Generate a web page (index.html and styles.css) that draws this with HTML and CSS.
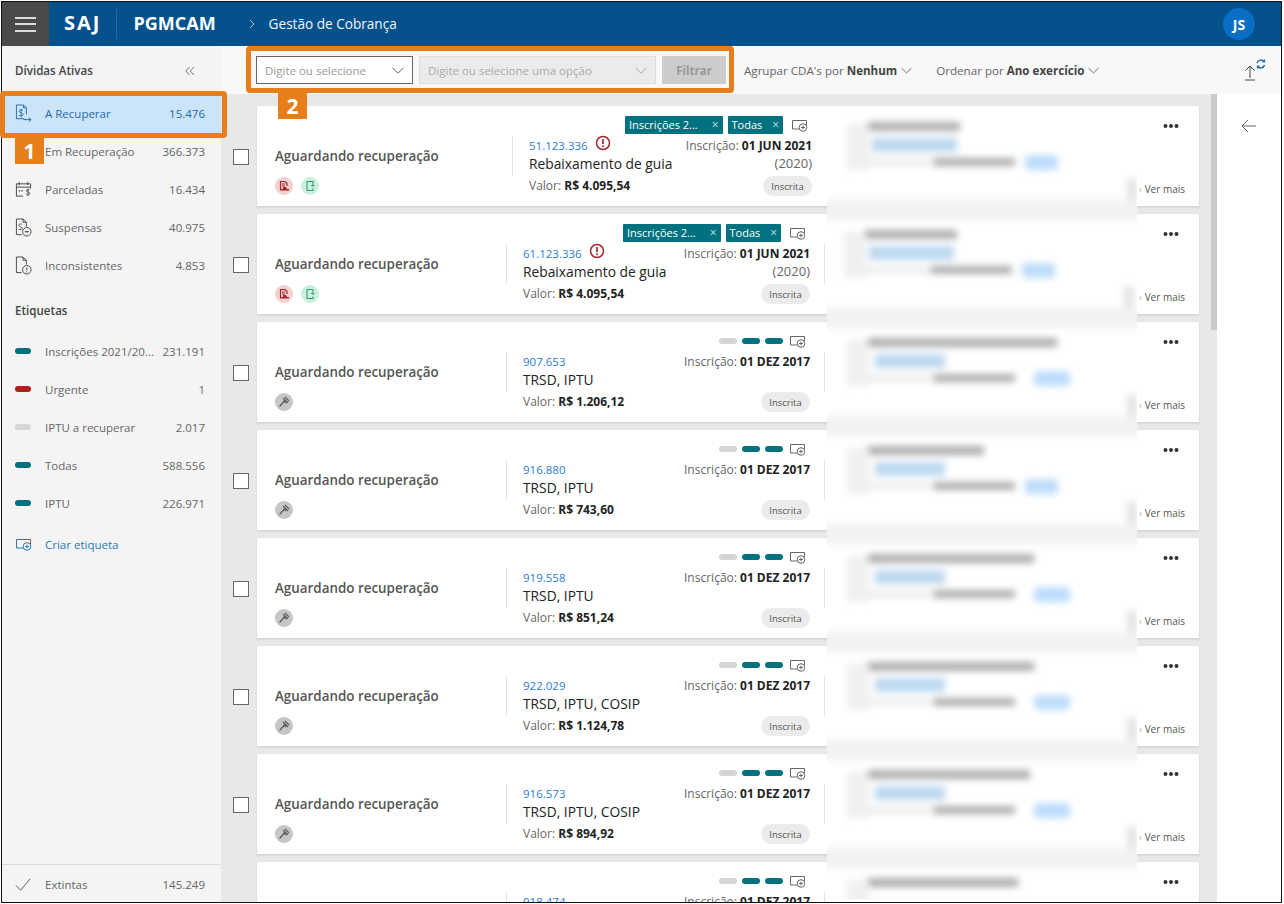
FILE: index.html
```html
<!DOCTYPE html>
<html lang="pt-BR">
<head>
<meta charset="utf-8">
<title>PGMCAM - Gestão de Cobrança</title>
<link rel="stylesheet" href="styles.css">
</head>
<body>
<svg class="defs" width="0" height="0" aria-hidden="true">
  <symbol id="tag-add" viewBox="0 0 17 13"><path d="M9 10H1.500V1.500h14v5" fill="none" stroke="currentColor"/><circle cx="12" cy="8.500" r="3.800" fill="#fff" stroke="currentColor"/><path d="M12 6.500v4M10 8.500h4" stroke="currentColor"/></symbol>
  <symbol id="chev" viewBox="0 0 12 7"><path d="M.5.8 6 6.200 11.500.8" fill="none" stroke="currentColor"/></symbol>
  <symbol id="dots" viewBox="0 0 16 6"><circle cx="2.500" cy="3" r="2"/><circle cx="8" cy="3" r="2"/><circle cx="13.500" cy="3" r="2"/></symbol>
  <symbol id="gavel" viewBox="0 0 18 18"><circle cx="9" cy="9" r="9" fill="#c6c6c6"/><path d="m8 5 5 5M10 4l4 4M8.500 7.500 11 10M9 8.500 4.500 13.500" fill="none" stroke="#5a5a5a" stroke-width="1.200"/></symbol>
  <symbol id="red-doc" viewBox="0 0 18 18"><circle cx="9" cy="9" r="9" fill="#f6cfd0"/><path d="M5.500 12V4.500h4.500l2 2V9M7 7h3M7 9h3" fill="none" stroke="#a4262c" stroke-width="1.200"/><path d="M8 10h3l1 2h2v1.500H5V12h3z" fill="#a4262c"/></symbol>
  <symbol id="green-doc" viewBox="0 0 18 18"><circle cx="9" cy="9" r="9" fill="#c9f1dd"/><path d="M12 7V4.500H6v9h6v-2M10 8.500h2.500L11.500 7.500M12.500 8.500l-1 1" fill="none" stroke="#3a9a70" stroke-width="1.100"/></symbol>
  <symbol id="alert" viewBox="0 0 16 16"><circle cx="8" cy="8" r="6.500" fill="none" stroke="#a4262c" stroke-width="1.500"/><path d="M8 4v5" stroke="#a4262c" stroke-width="1.700"/><circle cx="8" cy="11.300" r="1" fill="#a4262c"/></symbol>
  <symbol id="i-recover" viewBox="0 0 18 20"><path d="M10 15.500H1.500V1h7.500l3 3v7M9 1v3h3" fill="none" stroke="currentColor"/><path d="M8.500 6.500C6 5.500 4 6.500 4.500 8c.4 1.400 4 1.200 4.200 3 .2 1.500-2.500 2-4.500 1M6.500 5v9" fill="none" stroke="currentColor" stroke-width=".9"/><path d="M9 16.500h8M14.500 14.200l2.500 2.300-2.500 2.300" fill="none" stroke="currentColor"/></symbol>
  <symbol id="i-cal" viewBox="0 0 18 18"><path d="M16.500 8V3H1.500v13h7M1.500 6.500h15M4.500 1v3.500M13.500 1v3.500" fill="none" stroke="currentColor"/><path d="M4 10.500h1.500M6.800 10.500h1.500" stroke="currentColor" stroke-width="1.400"/><path d="M15.500 9.500c-2-1-3.800-.3-3.500 1 .3 1.300 3.500 1 3.700 2.500.2 1.300-2.300 2-4 .9M13.800 8.200v8" fill="none" stroke="currentColor" stroke-width=".9"/></symbol>
  <symbol id="i-susp" viewBox="0 0 18 20"><path d="M7 17.500H1.500V1h7l3.500 3.500V9M8.500 1v3.500H12" fill="none" stroke="currentColor"/><path d="M7.500 6.500C5.500 5.800 3.500 6.500 4 8c.4 1.300 3.700 1.200 3.800 2.800.1 1.300-2.200 1.700-4 1" fill="none" stroke="currentColor" stroke-width=".9"/><circle cx="12.500" cy="14.500" r="4.500" fill="none" stroke="currentColor"/><path d="M10.500 14.500h4" stroke="currentColor" stroke-width="1.300"/></symbol>
  <symbol id="i-inc" viewBox="0 0 18 20"><path d="M7 17.500H1.500V1h7l3.500 3.500V9M8.500 1v3.500H12" fill="none" stroke="currentColor"/><circle cx="12.500" cy="14.500" r="4.500" fill="none" stroke="currentColor"/><path d="M12.500 12v3.200M12.500 16.200v1.200" stroke="currentColor"/></symbol>
</svg>
<div class="frame">
  <header class="topbar">
    <button class="burger" aria-label="Menu"><span></span><span></span><span></span></button>
    <span class="logo">SAJ</span>
    <span class="logo-sep"></span>
    <span class="logo logo-app">PGMCAM</span>
    <svg class="crumb" width="6" height="10" viewBox="0 0 6 10"><path d="m1 1 4 4-4 4" fill="none" stroke="#9cc0dc"/></svg>
    <span class="crumb-title">Gestão de Cobrança</span>
    <span class="avatar">JS</span>
  </header>
  <div class="body">
    <aside class="side">
      <div class="side-head"><span>Dívidas Ativas</span>
        <svg width="10" height="10" viewBox="0 0 10 10"><path d="M4.500 1 .8 5l3.700 4M9 1 5.300 5 9 9" fill="none" stroke="#777"/></svg>
      </div>
      <a class="item item-on"><svg class="ico"><use href="#i-recover"/></svg><span class="lbl">A Recuperar</span><span class="num">15.476</span></a>
      <a class="item"><svg class="ico"><use href="#i-recover"/></svg><span class="lbl">Em Recuperação</span><span class="num">366.373</span></a>
      <a class="item"><svg class="ico"><use href="#i-cal"/></svg><span class="lbl">Parceladas</span><span class="num">16.434</span></a>
      <a class="item"><svg class="ico"><use href="#i-susp"/></svg><span class="lbl">Suspensas</span><span class="num">40.975</span></a>
      <a class="item"><svg class="ico"><use href="#i-inc"/></svg><span class="lbl">Inconsistentes</span><span class="num">4.853</span></a>
      <div class="side-title">Etiquetas</div>
      <a class="item"><i class="bar teal"></i><span class="lbl">Inscrições 2021/20...</span><span class="num">231.191</span></a>
      <a class="item"><i class="bar red"></i><span class="lbl">Urgente</span><span class="num">1</span></a>
      <a class="item"><i class="bar grey"></i><span class="lbl">IPTU a recuperar</span><span class="num">2.017</span></a>
      <a class="item"><i class="bar teal"></i><span class="lbl">Todas</span><span class="num">588.556</span></a>
      <a class="item"><i class="bar teal"></i><span class="lbl">IPTU</span><span class="num">226.971</span></a>
      <a class="item item-new"><svg class="ico-tag"><use href="#tag-add"/></svg><span class="lbl">Criar etiqueta</span></a>
      <a class="item item-foot">
        <svg class="ico" viewBox="0 0 18 18"><path d="M1 10l5 5L16 3" fill="none" stroke="#555"/></svg>
        <span class="lbl">Extintas</span><span class="num">145.249</span></a>
    </aside>
    <div class="workspace">
      <div class="toolbar">
        <div class="combo"><span>Digite ou selecione</span><svg class="chev"><use href="#chev"/></svg></div>
        <div class="combo combo-off"><span>Digite ou selecione uma opção</span><svg class="chev"><use href="#chev"/></svg></div>
        <button class="filter">Filtrar</button>
        <span class="sort sort-a">Agrupar CDA's por <b>Nenhum</b><svg class="chev"><use href="#chev"/></svg></span>
        <span class="sort sort-b">Ordenar por <b>Ano exercício</b><svg class="chev"><use href="#chev"/></svg></span>
        <svg class="export" width="22" height="24" viewBox="0 0 22 24"><path d="M6 8v12M1.500 12.500 6 8l4.500 4.500M1 22h10" fill="none" stroke="#444"/><path d="M13 5a4 4 0 0 1 7-1.500M20.500 7a4 4 0 0 1-7 1.500" fill="none" stroke="#1f6aa5" stroke-width="1.400"/><path d="m21 1 .2 3.500-3.400-.2zM13 11l-.2-3.500 3.400.2z" fill="#1f6aa5"/></svg>
      </div>
      <div class="content">
        <div class="list">

          <div class="row">
            <span class="check"></span>
            <article class="card">
              <div class="c-left c-left-w"><div class="status">Aguardando recuperação</div><div class="badges"><svg><use href="#red-doc"/></svg><svg><use href="#green-doc"/></svg></div></div>
              <div class="c-main c-main-w">
                <div class="tags"><span class="tag">Inscrições 2... <em>×</em></span><span class="tag">Todas <em>×</em></span><svg class="tag-add"><use href="#tag-add"/></svg></div>
                <div class="line"><span class="code">51.123.336<svg class="alert"><use href="#alert"/></svg></span><span class="ins">Inscrição: <b>01 JUN 2021</b></span></div>
                <div class="line"><span class="title">Rebaixamento de guia</span><span class="year">(2020)</span></div>
                <div class="line line-val"><span class="val">Valor: <b>R$ 4.095,54</b></span><span class="pill">Inscrita</span></div>
              </div>
              <div class="c-end"><svg class="dots"><use href="#dots"/></svg><span class="more"><s>‹</s> Ver mais</span></div>
            </article>
          </div>

          <div class="row">
            <span class="check"></span>
            <article class="card">
              <div class="c-left"><div class="status">Aguardando recuperação</div><div class="badges"><svg><use href="#red-doc"/></svg><svg><use href="#green-doc"/></svg></div></div>
              <div class="c-main">
                <div class="tags"><span class="tag">Inscrições 2... <em>×</em></span><span class="tag">Todas <em>×</em></span><svg class="tag-add"><use href="#tag-add"/></svg></div>
                <div class="line"><span class="code">61.123.336<svg class="alert"><use href="#alert"/></svg></span><span class="ins">Inscrição: <b>01 JUN 2021</b></span></div>
                <div class="line"><span class="title">Rebaixamento de guia</span><span class="year">(2020)</span></div>
                <div class="line line-val"><span class="val">Valor: <b>R$ 4.095,54</b></span><span class="pill">Inscrita</span></div>
              </div>
              <div class="c-end"><svg class="dots"><use href="#dots"/></svg><span class="more"><s>‹</s> Ver mais</span></div>
            </article>
          </div>

          <div class="row">
            <span class="check"></span>
            <article class="card">
              <div class="c-left"><div class="status">Aguardando recuperação</div><div class="badges"><svg><use href="#gavel"/></svg></div></div>
              <div class="c-main">
                <div class="tags"><i class="mini grey"></i><i class="mini teal"></i><i class="mini teal"></i><svg class="tag-add"><use href="#tag-add"/></svg></div>
                <div class="line"><span class="code">907.653</span><span class="ins">Inscrição: <b>01 DEZ 2017</b></span></div>
                <div class="line"><span class="title">TRSD, IPTU</span></div>
                <div class="line line-val"><span class="val">Valor: <b>R$ 1.206,12</b></span><span class="pill">Inscrita</span></div>
              </div>
              <div class="c-end"><svg class="dots"><use href="#dots"/></svg><span class="more"><s>‹</s> Ver mais</span></div>
            </article>
          </div>

          <div class="row">
            <span class="check"></span>
            <article class="card">
              <div class="c-left"><div class="status">Aguardando recuperação</div><div class="badges"><svg><use href="#gavel"/></svg></div></div>
              <div class="c-main">
                <div class="tags"><i class="mini grey"></i><i class="mini teal"></i><i class="mini teal"></i><svg class="tag-add"><use href="#tag-add"/></svg></div>
                <div class="line"><span class="code">916.880</span><span class="ins">Inscrição: <b>01 DEZ 2017</b></span></div>
                <div class="line"><span class="title">TRSD, IPTU</span></div>
                <div class="line line-val"><span class="val">Valor: <b>R$ 743,60</b></span><span class="pill">Inscrita</span></div>
              </div>
              <div class="c-end"><svg class="dots"><use href="#dots"/></svg><span class="more"><s>‹</s> Ver mais</span></div>
            </article>
          </div>

          <div class="row">
            <span class="check"></span>
            <article class="card">
              <div class="c-left"><div class="status">Aguardando recuperação</div><div class="badges"><svg><use href="#gavel"/></svg></div></div>
              <div class="c-main">
                <div class="tags"><i class="mini grey"></i><i class="mini teal"></i><i class="mini teal"></i><svg class="tag-add"><use href="#tag-add"/></svg></div>
                <div class="line"><span class="code">919.558</span><span class="ins">Inscrição: <b>01 DEZ 2017</b></span></div>
                <div class="line"><span class="title">TRSD, IPTU</span></div>
                <div class="line line-val"><span class="val">Valor: <b>R$ 851,24</b></span><span class="pill">Inscrita</span></div>
              </div>
              <div class="c-end"><svg class="dots"><use href="#dots"/></svg><span class="more"><s>‹</s> Ver mais</span></div>
            </article>
          </div>

          <div class="row">
            <span class="check"></span>
            <article class="card">
              <div class="c-left"><div class="status">Aguardando recuperação</div><div class="badges"><svg><use href="#gavel"/></svg></div></div>
              <div class="c-main">
                <div class="tags"><i class="mini grey"></i><i class="mini teal"></i><i class="mini teal"></i><svg class="tag-add"><use href="#tag-add"/></svg></div>
                <div class="line"><span class="code">922.029</span><span class="ins">Inscrição: <b>01 DEZ 2017</b></span></div>
                <div class="line"><span class="title">TRSD, IPTU, COSIP</span></div>
                <div class="line line-val"><span class="val">Valor: <b>R$ 1.124,78</b></span><span class="pill">Inscrita</span></div>
              </div>
              <div class="c-end"><svg class="dots"><use href="#dots"/></svg><span class="more"><s>‹</s> Ver mais</span></div>
            </article>
          </div>

          <div class="row">
            <span class="check"></span>
            <article class="card">
              <div class="c-left"><div class="status">Aguardando recuperação</div><div class="badges"><svg><use href="#gavel"/></svg></div></div>
              <div class="c-main">
                <div class="tags"><i class="mini grey"></i><i class="mini teal"></i><i class="mini teal"></i><svg class="tag-add"><use href="#tag-add"/></svg></div>
                <div class="line"><span class="code">916.573</span><span class="ins">Inscrição: <b>01 DEZ 2017</b></span></div>
                <div class="line"><span class="title">TRSD, IPTU, COSIP</span></div>
                <div class="line line-val"><span class="val">Valor: <b>R$ 894,92</b></span><span class="pill">Inscrita</span></div>
              </div>
              <div class="c-end"><svg class="dots"><use href="#dots"/></svg><span class="more"><s>‹</s> Ver mais</span></div>
            </article>
          </div>

          <div class="row">
            <span class="check"></span>
            <article class="card">
              <div class="c-left"><div class="status">Aguardando recuperação</div><div class="badges"><svg><use href="#gavel"/></svg></div></div>
              <div class="c-main">
                <div class="tags"><i class="mini grey"></i><i class="mini teal"></i><i class="mini teal"></i><svg class="tag-add"><use href="#tag-add"/></svg></div>
                <div class="line"><span class="code">918.474</span><span class="ins">Inscrição: <b>01 DEZ 2017</b></span></div>
                <div class="line"><span class="title">TRSD, IPTU</span></div>
              </div>
              <div class="c-end"><svg class="dots"><use href="#dots"/></svg><span class="peek">CDA 000001222</span></div>
            </article>
          </div>
        </div>

        <div class="scroll"><div class="thumb"></div></div>

        <div class="redact" aria-hidden="true">
          <div class="r"><div class="l1"></div><div class="l2"></div><div class="l3"><i></i><i></i></div></div>
          <div class="r r-shift2"><div class="l1"></div><div class="l2"></div><div class="l3"><i></i><i></i></div></div>
          <div class="r"><div class="l1"></div><div class="l2"></div><div class="l3"><i></i><i></i></div></div>
          <div class="r"><div class="l1"></div><div class="l2"></div><div class="l3"><i></i><i></i></div></div>
          <div class="r"><div class="l1"></div><div class="l2"></div><div class="l3"><i></i><i></i></div></div>
          <div class="r"><div class="l1"></div><div class="l2"></div><div class="l3"><i></i><i></i></div></div>
          <div class="r"><div class="l1"></div><div class="l2"></div><div class="l3"><i></i><i></i></div></div>
          <div class="r"><div class="l1"></div></div>
        </div>
      </div>
    </div>
    <div class="rail">
      <svg class="back" width="16" height="14" viewBox="0 0 16 14"><path d="M15 7H1.500M7 1 1 7l6 6" fill="none" stroke="#666"/></svg>
    </div>
  </div>
</div>
<div class="hl hl-side"></div>
<div class="hl hl-tool"></div>
<div class="step step-1">1</div>
<div class="step step-2">2</div>
</body>
</html>
```

FILE: styles.css
```css
* { box-sizing: border-box; }
html, body { margin: 0; padding: 0; height: 100%; background: #fff; overflow: hidden; }
body {
  position: relative;
  font-family: "Open Sans", "Noto Sans", "Liberation Sans", sans-serif;
  font-size: 12px;
  color: #444;
}
.defs { position: absolute; }

.frame {
  margin: 1px;
  width: 1281px;
  height: 902px;
  border: 1px solid #111;
  display: flex;
  flex-direction: column;
  overflow: hidden;
  background: #fff;
}

/* top bar */
.topbar {
  flex: 0 0 44px;
  display: flex;
  align-items: center;
  background: #04518c;
  color: #fff;
}
.burger {
  width: 47px;
  height: 44px;
  border: 0;
  padding: 0 13px;
  background: #4a4a4a;
  display: flex;
  flex-direction: column;
  justify-content: center;
  gap: 4.500px;
  margin-right: 15px;
}
.burger span { display: block; height: 2px; background: #dcdcdc; }
.logo { font-size: 20px; font-weight: 700; letter-spacing: 2px; padding-bottom: 3px; }
.logo-sep { width: 1px; height: 30px; background: #1b6aa8; margin: 0 16px 0 15px; }
.logo-app { font-size: 18px; letter-spacing: 0; }
.crumb { margin: 0 14px 0 33px; }
.crumb-title { font-size: 13.600px; color: #f2f6fa; padding-bottom: 2px; }
.avatar {
  margin-left: auto;
  margin-right: 26px;
  width: 32px;
  height: 32px;
  border-radius: 50%;
  background: #0a6ec4;
  font-size: 14px;
  font-weight: 700;
  display: flex;
  align-items: center;
  justify-content: center;
}

.body { flex: 1; display: flex; min-height: 0; }

/* sidebar */
.side {
  flex: 0 0 219px;
  background: #f4f4f4;
  display: flex;
  flex-direction: column;
}
.side-head {
  height: 49px;
  padding: 0 26px 0 13px;
  display: flex;
  align-items: center;
  justify-content: space-between;
  font-weight: 600;
  font-size: 11.600px;
  color: #444;
}
.side-title {
  height: 48px;
  padding: 2px 0 0 13px;
  display: flex;
  align-items: center;
  font-weight: 600;
  font-size: 11.600px;
  color: #444;
}
.item {
  flex: 0 0 38px;
  display: flex;
  align-items: center;
  padding: 0 16px 2px 13px;
  color: #666;
  font-size: 11.500px;
}
.item .lbl { flex: 1; white-space: nowrap; }
.item .num { white-space: nowrap; }
.ico { width: 17px; height: 19px; margin-right: 13px; color: #444; flex: none; }
.ico-tag { width: 17px; height: 13px; margin-right: 13px; flex: none; color: #1c78c8; }
.item-on { background: #cce4f7; color: #1c6ab0; }
.item-on .ico { color: #1c6ab0; }
.item-new { margin-top: 3px; color: #1c78c8; }
.item-foot {
  margin-top: auto;
  border-top: 1px solid #dcdcdc;
  padding-top: 3px;
}
.bar { width: 16px; height: 6px; border-radius: 3px; margin-right: 14px; flex: none; }
.teal { background: #00727f; }
.red { background: #b71c1c; }
.grey { background: #d6d6d6; }

/* workspace */
.workspace { flex: 0 0 996px; display: flex; flex-direction: column; min-width: 0; }
.toolbar {
  flex: 0 0 48px;
  background: #f8f8f8;
  display: flex;
  align-items: center;
  padding-left: 35px;
  gap: 6px;
  width: 1060px;
  position: relative;
  z-index: 1;
}
.combo {
  height: 28px;
  width: 157px;
  background: #fff;
  border: 1px solid #666;
  display: flex;
  align-items: center;
  justify-content: space-between;
  padding: 0 8px;
  color: #999;
  font-size: 11.500px;
}
.combo-off { width: 237px; background: #ebebeb; border-color: #ddd; color: #aaa; }
.chev { width: 12px; height: 7px; color: #666; flex: none; }
.combo-off .chev { color: #aaa; }
.filter {
  width: 64px;
  height: 28px;
  border: 0;
  background: #ccc;
  color: #999;
  font: 700 11.500px "Open Sans", "Noto Sans", sans-serif;
}
.sort { display: flex; align-items: center; font-size: 11.600px; color: #666; white-space: pre; }
.sort b { color: #444; font-weight: 700; }
.sort .chev { margin-left: 4px; width: 11px; }
.sort-a { margin-left: 12px; }
.sort-b { margin-left: 18px; }
.export { margin-left: auto; margin-right: 15px; }

.content { flex: 1; display: flex; min-height: 0; background: #e8e8e8; position: relative; }
.list {
  flex: 0 0 990px;
  padding: 12px 12px 0;
  display: flex;
  flex-direction: column;
  gap: 8px;
  overflow: hidden;
}
.row { flex: 0 0 100px; display: flex; align-items: center; }
.check {
  width: 16px;
  height: 16px;
  margin: 2px 8px 0 0;
  background: #fff;
  border: 1px solid #666;
  flex: none;
}
.card {
  flex: 1;
  height: 100px;
  background: #fff;
  display: flex;
  box-shadow: 0 1px 2px rgba(0, 0, 0, .12);
}
.c-left { flex: 0 0 249px; padding: 39px 0 0 18px; }
.c-left-w { flex-basis: 255px; }
.status { height: 22px; line-height: 22px; font-size: 13.400px; font-weight: 600; color: #555; white-space: nowrap; }
.badges { display: flex; gap: 8px; margin-top: 10px; }
.badges svg { width: 18px; height: 18px; }

.c-main {
  flex: 0 0 319px;
  padding: 10px 15px 0 17px;
  background-image: linear-gradient(#e3e3e3, #e3e3e3), linear-gradient(#e3e3e3, #e3e3e3);
  background-size: 1px 40px;
  background-position: left 30px, right 30px;
  background-repeat: no-repeat;
}
.c-main-w { flex-basis: 316px; padding-right: 16px; }
.tags { height: 18px; display: flex; align-items: center; justify-content: flex-end; }
.tag {
  height: 18px;
  padding: 0 4px;
  margin-right: 5px;
  background: #00727f;
  border-radius: 1px;
  color: #fff;
  font-size: 11px;
  line-height: 18px;
  white-space: pre;
}
.tag em { font-style: normal; margin-left: 7px; font-size: 12px; color: #bfe3e6; }
.tag:first-child em { margin-left: 11px; }
.tag-add { width: 17px; height: 13px; margin: 0 4px 0 3px; color: #666; }
.mini + .tag-add { margin-left: 6px; }
.mini { width: 18px; height: 6px; border-radius: 3px; margin-left: 5px; flex: none; }
.line { display: flex; justify-content: space-between; align-items: center; height: 18px; white-space: nowrap; }
.tags + .line { margin-top: 2px; }
.code { color: #2b7cd3; font-size: 11.500px; display: flex; align-items: center; }
.alert { width: 16px; height: 16px; margin: -4px 0 0 7px; }
.ins { font-size: 12px; color: #666; }
.ins b { color: #222; font-weight: 700; }
.title { font-size: 13.800px; font-weight: 400; color: #222; }
.year { font-size: 13px; color: #666; }
.line-val { height: 20px; margin-top: 4px; }
.val { font-size: 12px; color: #666; margin-top: -2px; }
.val b { color: #222; font-weight: 700; }
.pill {
  width: 49px;
  height: 20px;
  border-radius: 10px;
  background: #ebebeb;
  color: #555;
  font-size: 9.500px;
  display: flex;
  align-items: center;
  justify-content: center;
}

.c-end {
  flex: 1;
  position: relative;
  display: flex;
  flex-direction: column;
  align-items: flex-end;
  padding: 17px 20px 0 0;
}
.dots { width: 16px; height: 6px; fill: #333; flex: none; }
.more { margin: 53px -6px 0 0; font-size: 10px; color: #555; white-space: pre; }
.more s { text-decoration: none; color: #bbb; }
.peek { position: absolute; left: 18px; top: 37px; color: #2b7cd3; font-size: 11px; }

.scroll { flex: 0 0 6px; }
.thumb { height: 236px; background: #ccc; }

/* blurred column that hides personal data */
.redact {
  position: absolute;
  left: 606px;
  top: 12px;
  width: 310px;
  height: 793px;
  background: #fff;
  overflow: hidden;
}
.r {
  height: 108px;
  padding-top: 16px;
  position: relative;
  filter: blur(3.500px);
  background: linear-gradient(#e4e4e4, #e4e4e4) right 72px / 10px 28px no-repeat;
}
.r::before { content: ""; position: absolute; left: 20px; top: 18px; width: 22px; height: 46px; background: #f0f0f0; }
.r::after { content: ""; position: absolute; left: -20px; right: -20px; top: 94px; height: 20px; background: #f2f2f2; }
.l1 { height: 9px; margin-left: 40px; width: 167px; background: #adadad; }
.l2 { height: 14px; margin: 7px 0 0 48px; width: 70px; background: #bdd8ef; }
.l3 { height: 18px; margin: 1px 0 0 20px; display: flex; align-items: center; }
.l3 i:first-child { width: 168px; height: 8px; margin-right: 19px; background: linear-gradient(90deg, #eee 0 52%, #adadad 52%); }
.l3 i:last-child { width: 36px; height: 15px; border-radius: 4px; background: #bddcfa; }
.r:nth-child(1) .l1, .r:nth-child(2) .l1 { width: 93px; }
.r:nth-child(3) .l1 { width: 190px; }
.r:nth-child(4) .l1 { width: 117px; }
.r:nth-child(7) .l1 { width: 163px; }
.r:nth-child(8) .l1 { width: 151px; }
.r:nth-child(1) .l2, .r:nth-child(2) .l2 { width: 85px; margin-left: 45px; }
.r:nth-child(1) .l3 i:first-child, .r:nth-child(2) .l3 i:first-child, .r:nth-child(4) .l3 i:first-child { margin-right: 10px; }
.r:nth-child(1) .l3 i:last-child, .r:nth-child(2) .l3 i:last-child, .r:nth-child(4) .l3 i:last-child { width: 33px; }
.r-shift2 { transform: translateX(-3px); }

/* right rail */
.rail { flex: 1; background: #fff; padding: 73px 0 0 24px; }
.back { display: block; }

/* orange tutorial marks */
.hl { position: absolute; z-index: 5; border: 5px solid #e67e1c; border-radius: 4px; }
.hl-side { left: 0; top: 91px; width: 227px; height: 47px; }
.hl-tool { left: 246px; top: 46px; width: 488px; height: 47px; }
.step {
  position: absolute;
  z-index: 6;
  width: 29px;
  height: 26px;
  background: #e67e1c;
  color: #fff;
  font-weight: 700;
  font-size: 21px;
  line-height: 1;
  display: flex;
  align-items: center;
  justify-content: center;
}
.step-1 { left: 15px; top: 138px; }
.step-2 { left: 278px; top: 93px; }
```
